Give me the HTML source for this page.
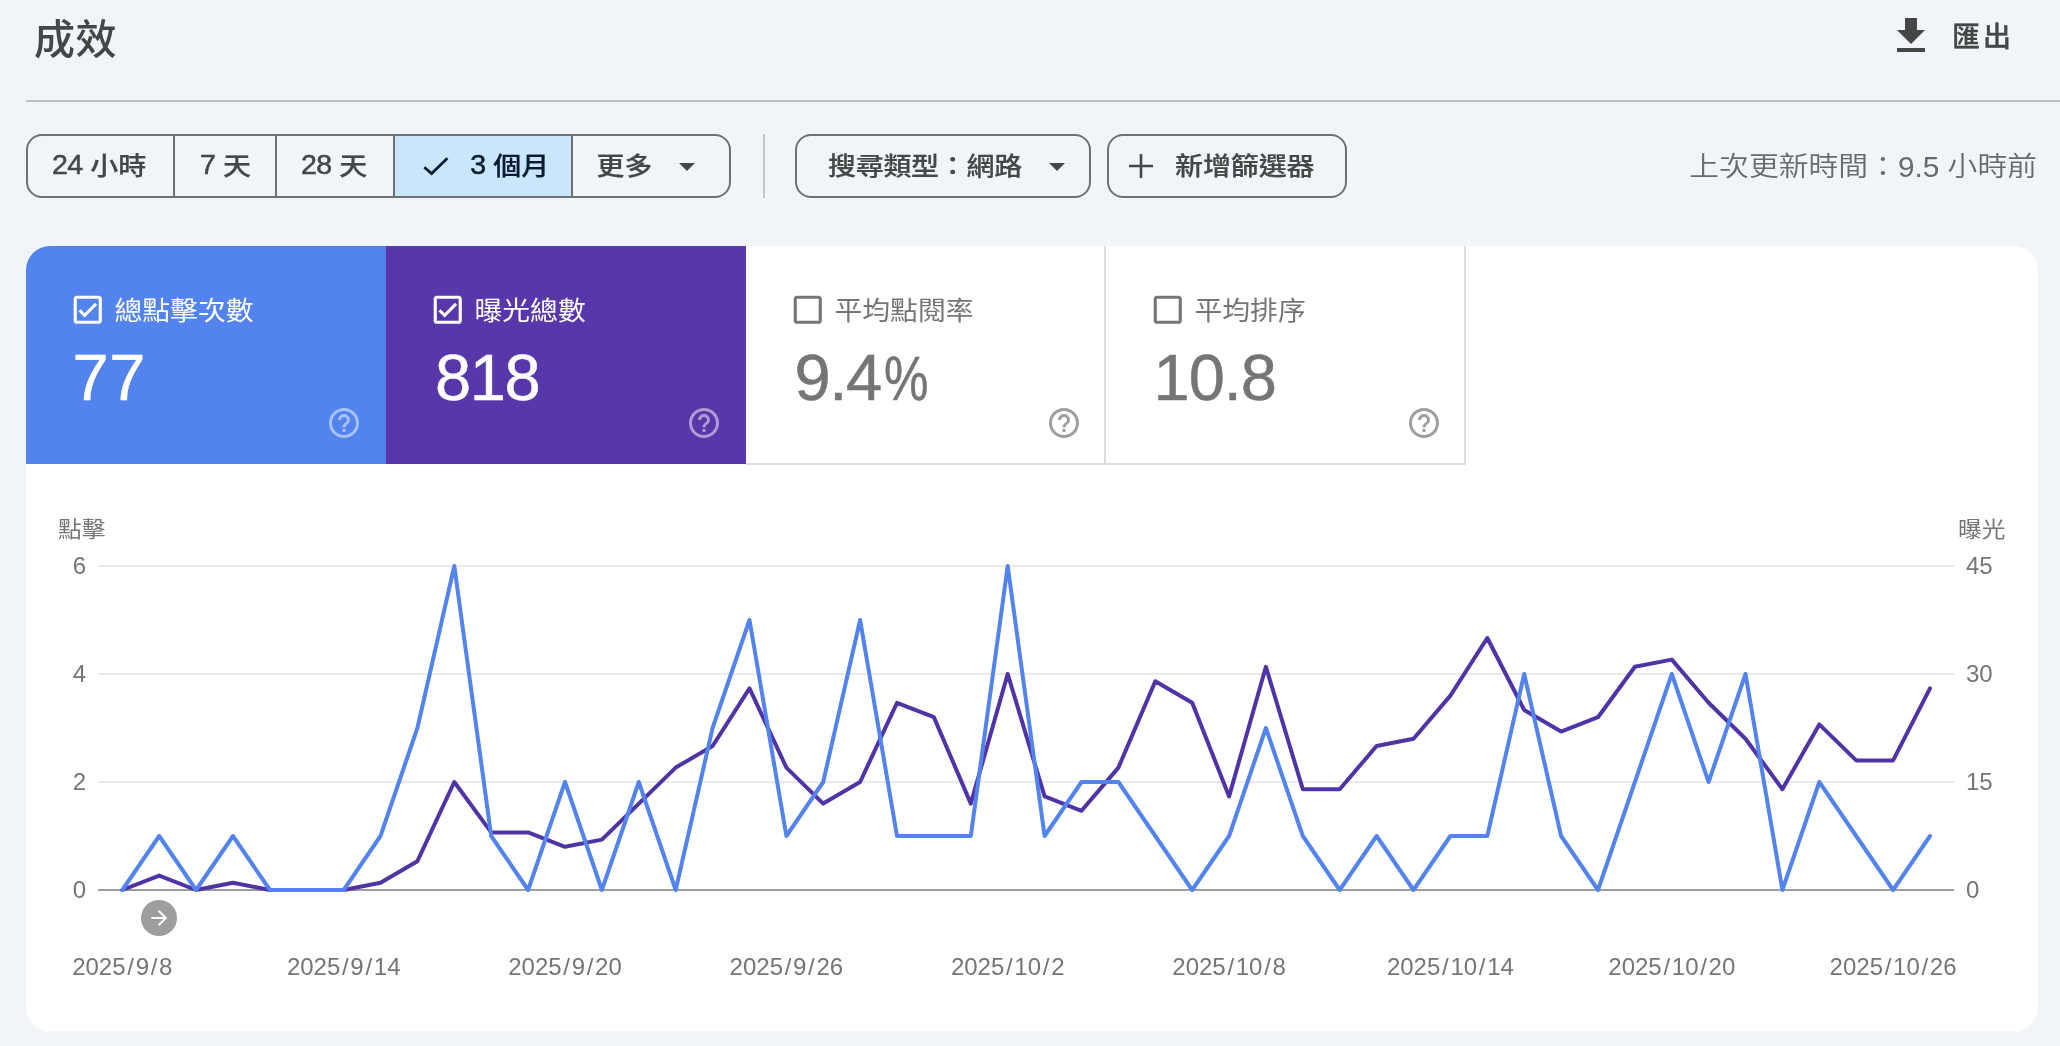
<!DOCTYPE html>
<html lang="zh-Hant"><head><meta charset="utf-8"><title>成效</title>
<style>
html,body{margin:0;padding:0}
body{width:2060px;height:1046px;overflow:hidden;background:#f1f4f8;position:relative;font-family:"Liberation Sans","Noto Sans CJK TC",sans-serif;color:#454746}
#root{position:absolute;left:0;top:0;width:2060px;height:1046px;transform:translateZ(0)}
.abs{position:absolute;white-space:nowrap}
.title{left:34px;top:10px;font-size:41px;line-height:60px;font-weight:500;color:#454746;letter-spacing:.5px}
.export{left:1952px;top:18px;font-size:28px;line-height:40px;font-weight:500;color:#454746;letter-spacing:3px;-webkit-text-stroke:.3px currentColor}
.hr{left:26px;top:100px;width:2034px;height:2px;background:#bdc1c6}
.seg{top:134px;height:60px;border:2px solid #6d7176;box-sizing:content-box;font-size:28px;line-height:60px;font-weight:500;color:#454746;-webkit-text-stroke:.25px currentColor}
.seg span{position:absolute;top:1px;white-space:nowrap}
.seg b{line-height:0;font-weight:400;font-size:28.5px;letter-spacing:-.6px;-webkit-text-stroke:.55px currentColor;position:relative;top:-2.2px}
.seg u,.upd u,.lbl u{display:inline-block;text-decoration:none;transform:scaleY(.91);transform-origin:50% 54%}
.lbl u{transform:scaleY(.94)}
.vsep{position:absolute;top:0;width:2px;height:60px;background:#6d7176}
.upd{right:23px;top:147px;font-size:29.8px;line-height:40px;font-weight:350;color:#676b70}
.card{left:26px;top:246px;width:2012px;height:785px;background:#fff;border-radius:24px;overflow:hidden}
.tab{position:absolute;top:0;height:218px;width:360px;box-sizing:border-box}
.tab .lbl{position:absolute;left:88.5px;top:44.5px;font-size:27.8px;line-height:40px;font-weight:400;white-space:nowrap}
.tab .num{position:absolute;left:46px;top:96px;font-size:65px;line-height:72px;white-space:nowrap;-webkit-text-stroke:.5px currentColor}
.tab svg.cb{position:absolute;left:43.3px;top:45.4px}
.tab svg.help{position:absolute;left:300px;top:159px}
.t1{left:0;background:#5383ec;color:#fff}
.t2{left:360px;background:#5837ab;color:#fff}
.t3{left:720px;color:#757575;height:219px;border-right:2px solid #dcdcde;border-bottom:2px solid #dcdcde}
.t4{left:1080px;color:#757575;height:219px;border-right:2px solid #dcdcde;border-bottom:2px solid #dcdcde}
.pct{display:inline-block;transform:scale(.77,.97);transform-origin:0 78%;margin-left:3px}
svg text{font-family:"Liberation Sans","Noto Sans CJK TC",sans-serif}
</style></head><body><div id="root">
<div class="abs title">成效</div>
<svg class="abs" style="left:1887px;top:12px" width="48" height="48" viewBox="0 0 24 24"><path fill="#454746" d="M19 9h-4V3H9v6H5l7 7 7-7zM5 18v2h14v-2H5z"/></svg>
<div class="abs export">匯出</div>
<div class="abs hr"></div>

<div class="abs seg" style="left:26px;width:701px;border-radius:16px">
 <span style="left:24px"><b>24</b> <u>小時</u></span><i class="vsep" style="left:145px"></i>
 <span style="left:172px"><b>7</b> <u>天</u></span><i class="vsep" style="left:247px"></i>
 <span style="left:273px"><b>28</b> <u>天</u></span>
 <div style="position:absolute;left:365px;top:0;width:180px;height:60px;background:#c9e6fc;border-left:2px solid #6d7176;border-right:2px solid #6d7176;box-sizing:border-box"></div>
 <svg style="position:absolute;left:393px;top:19px" width="30" height="24" viewBox="0 0 30 24"><path d="M3.3 12.3 L10.6 18.6 L26.4 3.3" fill="none" stroke="#071c33" stroke-width="2.8"/></svg>
 <span style="left:442.3px;color:#071c33"><b>3</b> <u>個月</u></span>
 <span style="left:568.5px"><u>更多</u></span>
 <svg style="position:absolute;left:651px;top:27px" width="16" height="8" viewBox="0 0 16 8"><path d="M0 0h16l-8 8z" fill="#454746"/></svg>
</div>
<div class="abs" style="left:763px;top:134px;width:2px;height:64px;background:#c5c7c5"></div>
<div class="abs seg" style="left:795px;width:292px;border-radius:16px">
 <span style="left:31px;letter-spacing:-.3px"><u>搜尋類型：網路</u></span>
 <svg style="position:absolute;left:252px;top:27px" width="16" height="8" viewBox="0 0 16 8"><path d="M0 0h16l-8 8z" fill="#454746"/></svg>
</div>
<div class="abs seg" style="left:1107px;width:236px;border-radius:16px">
 <svg style="position:absolute;left:20px;top:18px" width="24" height="24" viewBox="0 0 24 24"><path d="M0 12h24M12 0v24" stroke="#454746" stroke-width="2.6" fill="none"/></svg>
 <span style="left:66px;letter-spacing:-.1px"><u>新增篩選器</u></span>
</div>
<div class="abs upd"><u>上次更新時間：</u>9.5 <u>小時前</u></div>

<div class="abs card">
 <div class="tab t1">
  <svg class="cb" width="37.5" height="37.5" viewBox="0 0 24 24"><path fill="#fff" d="M19 3H5c-1.1 0-2 .9-2 2v14c0 1.1.9 2 2 2h14c1.1 0 2-.9 2-2V5c0-1.1-.9-2-2-2zm0 16H5V5h14v14zM17.99 9l-1.41-1.42-6.59 6.59-2.58-2.57-1.42 1.41 4 3.99z"/></svg>
  <div class="lbl"><u>總點擊次數</u></div><div class="num" style="margin-left:0.5px;letter-spacing:0.6px">77</div>
  <svg class="help" width="36" height="36" viewBox="0 0 24 24"><path fill="#fff" fill-opacity=".5" d="M11 18h2v-2h-2v2zm1-16C6.48 2 2 6.48 2 12s4.48 10 10 10 10-4.48 10-10S17.52 2 12 2zm0 18c-4.41 0-8-3.59-8-8s3.59-8 8-8 8 3.59 8 8-3.59 8-8 8zm0-14c-2.21 0-4 1.79-4 4h2c0-1.1.9-2 2-2s2 .9 2 2c0 2-3 1.75-3 5h2c0-2.25 3-2.5 3-5 0-2.21-1.79-4-4-4z"/></svg>
 </div>
 <div class="tab t2">
  <svg class="cb" width="37.5" height="37.5" viewBox="0 0 24 24"><path fill="#fff" d="M19 3H5c-1.1 0-2 .9-2 2v14c0 1.1.9 2 2 2h14c1.1 0 2-.9 2-2V5c0-1.1-.9-2-2-2zm0 16H5V5h14v14zM17.99 9l-1.41-1.42-6.59 6.59-2.58-2.57-1.42 1.41 4 3.99z"/></svg>
  <div class="lbl"><u>曝光總數</u></div><div class="num" style="margin-left:3px;letter-spacing:-1.4px">818</div>
  <svg class="help" width="36" height="36" viewBox="0 0 24 24"><path fill="#fff" fill-opacity=".5" d="M11 18h2v-2h-2v2zm1-16C6.48 2 2 6.48 2 12s4.48 10 10 10 10-4.48 10-10S17.52 2 12 2zm0 18c-4.41 0-8-3.59-8-8s3.59-8 8-8 8 3.59 8 8-3.59 8-8 8zm0-14c-2.21 0-4 1.79-4 4h2c0-1.1.9-2 2-2s2 .9 2 2c0 2-3 1.75-3 5h2c0-2.25 3-2.5 3-5 0-2.21-1.79-4-4-4z"/></svg>
 </div>
 <div class="tab t3">
  <svg class="cb" width="37.5" height="37.5" viewBox="0 0 24 24"><path fill="#757575" d="M19 5v14H5V5h14m0-2H5c-1.1 0-2 .9-2 2v14c0 1.1.9 2 2 2h14c1.1 0 2-.9 2-2V5c0-1.1-.9-2-2-2z"/></svg>
  <div class="lbl"><u>平均點閱率</u></div><div class="num" style="margin-left:2.5px;letter-spacing:-1.3px">9.4<span class="pct">%</span></div>
  <svg class="help" width="36" height="36" viewBox="0 0 24 24"><path fill="#9e9e9e" d="M11 18h2v-2h-2v2zm1-16C6.48 2 2 6.48 2 12s4.48 10 10 10 10-4.48 10-10S17.52 2 12 2zm0 18c-4.41 0-8-3.59-8-8s3.59-8 8-8 8 3.59 8 8-3.59 8-8 8zm0-14c-2.21 0-4 1.79-4 4h2c0-1.1.9-2 2-2s2 .9 2 2c0 2-3 1.75-3 5h2c0-2.25 3-2.5 3-5 0-2.21-1.79-4-4-4z"/></svg>
 </div>
 <div class="tab t4">
  <svg class="cb" width="37.5" height="37.5" viewBox="0 0 24 24"><path fill="#757575" d="M19 5v14H5V5h14m0-2H5c-1.1 0-2 .9-2 2v14c0 1.1.9 2 2 2h14c1.1 0 2-.9 2-2V5c0-1.1-.9-2-2-2z"/></svg>
  <div class="lbl"><u>平均排序</u></div><div class="num" style="margin-left:1.5px;letter-spacing:-1px">10.8</div>
  <svg class="help" width="36" height="36" viewBox="0 0 24 24"><path fill="#9e9e9e" d="M11 18h2v-2h-2v2zm1-16C6.48 2 2 6.48 2 12s4.48 10 10 10 10-4.48 10-10S17.52 2 12 2zm0 18c-4.41 0-8-3.59-8-8s3.59-8 8-8 8 3.59 8 8-3.59 8-8 8zm0-14c-2.21 0-4 1.79-4 4h2c0-1.1.9-2 2-2s2 .9 2 2c0 2-3 1.75-3 5h2c0-2.25 3-2.5 3-5 0-2.21-1.79-4-4-4z"/></svg>
 </div>
</div>

<svg class="abs" style="left:0;top:0" width="2060" height="1046" viewBox="0 0 2060 1046">
 <g font-size="24" fill="#757575">
  <text transform="translate(58 537.2) scale(1.01 .92)" font-size="23.5">點擊</text><text transform="translate(1958 537.2) scale(1.01 .92)" font-size="23.5">曝光</text>
  <text x="86" y="574" text-anchor="end">6</text><text x="86" y="682" text-anchor="end">4</text><text x="86" y="790" text-anchor="end">2</text><text x="86" y="898" text-anchor="end">0</text>
  <text x="1966" y="574">45</text><text x="1966" y="682">30</text><text x="1966" y="790">15</text><text x="1966" y="898">0</text>
  <text x="122.3" y="974.8" text-anchor="middle">2025<tspan dx="1.7">/</tspan><tspan dx="1.7">9</tspan><tspan dx="1.7">/</tspan><tspan dx="1.7">8</tspan></text><text x="343.7" y="974.8" text-anchor="middle">2025<tspan dx="1.7">/</tspan><tspan dx="1.7">9</tspan><tspan dx="1.7">/</tspan><tspan dx="1.7">1</tspan>4</text><text x="565.0" y="974.8" text-anchor="middle">2025<tspan dx="1.7">/</tspan><tspan dx="1.7">9</tspan><tspan dx="1.7">/</tspan><tspan dx="1.7">2</tspan>0</text><text x="786.4" y="974.8" text-anchor="middle">2025<tspan dx="1.7">/</tspan><tspan dx="1.7">9</tspan><tspan dx="1.7">/</tspan><tspan dx="1.7">2</tspan>6</text><text x="1007.7" y="974.8" text-anchor="middle">2025<tspan dx="1.7">/</tspan><tspan dx="1.7">1</tspan>0<tspan dx="1.7">/</tspan><tspan dx="1.7">2</tspan></text><text x="1229.1" y="974.8" text-anchor="middle">2025<tspan dx="1.7">/</tspan><tspan dx="1.7">1</tspan>0<tspan dx="1.7">/</tspan><tspan dx="1.7">8</tspan></text><text x="1450.4" y="974.8" text-anchor="middle">2025<tspan dx="1.7">/</tspan><tspan dx="1.7">1</tspan>0<tspan dx="1.7">/</tspan><tspan dx="1.7">1</tspan>4</text><text x="1671.8" y="974.8" text-anchor="middle">2025<tspan dx="1.7">/</tspan><tspan dx="1.7">1</tspan>0<tspan dx="1.7">/</tspan><tspan dx="1.7">2</tspan>0</text><text x="1893.1" y="974.8" text-anchor="middle">2025<tspan dx="1.7">/</tspan><tspan dx="1.7">1</tspan>0<tspan dx="1.7">/</tspan><tspan dx="1.7">2</tspan>6</text>
 </g>
 <path d="M98 566H1954M98 674H1954M98 782H1954" stroke="#ebebeb" stroke-width="2"/>
 <path d="M98 890H1954" stroke="#9e9e9e" stroke-width="2"/>
 <polyline fill="none" stroke="#5034a5" stroke-width="4" stroke-linejoin="round" stroke-linecap="round" points="122.3,890.0 159.2,875.6 196.1,890.0 233.0,882.8 269.9,890.0 306.8,890.0 343.7,890.0 380.5,882.8 417.4,861.2 454.3,782.0 491.2,832.4 528.1,832.4 565.0,846.8 601.9,839.6 638.8,803.6 675.7,767.6 712.6,746.0 749.5,688.4 786.4,767.6 823.2,803.6 860.1,782.0 897.0,702.8 933.9,717.2 970.8,803.6 1007.7,674.0 1044.6,796.4 1081.5,810.8 1118.4,767.6 1155.3,681.2 1192.2,702.8 1229.1,796.4 1265.9,666.8 1302.8,789.2 1339.7,789.2 1376.6,746.0 1413.5,738.8 1450.4,695.6 1487.3,638.0 1524.2,710.0 1561.1,731.6 1598.0,717.2 1634.9,666.8 1671.8,659.6 1708.6,702.8 1745.5,738.8 1782.4,789.2 1819.3,724.4 1856.2,760.4 1893.1,760.4 1930.0,688.4"/>
 <polyline fill="none" stroke="#5383ec" stroke-width="4" stroke-linejoin="round" stroke-linecap="round" points="122.3,890.0 159.2,836.0 196.1,890.0 233.0,836.0 269.9,890.0 306.8,890.0 343.7,890.0 380.5,836.0 417.4,728.0 454.3,566.0 491.2,836.0 528.1,890.0 565.0,782.0 601.9,890.0 638.8,782.0 675.7,890.0 712.6,728.0 749.5,620.0 786.4,836.0 823.2,782.0 860.1,620.0 897.0,836.0 933.9,836.0 970.8,836.0 1007.7,566.0 1044.6,836.0 1081.5,782.0 1118.4,782.0 1155.3,836.0 1192.2,890.0 1229.1,836.0 1265.9,728.0 1302.8,836.0 1339.7,890.0 1376.6,836.0 1413.5,890.0 1450.4,836.0 1487.3,836.0 1524.2,674.0 1561.1,836.0 1598.0,890.0 1634.9,782.0 1671.8,674.0 1708.6,782.0 1745.5,674.0 1782.4,890.0 1819.3,782.0 1856.2,836.0 1893.1,890.0 1930.0,836.0"/>
 <circle cx="159" cy="918" r="18" fill="#9e9e9e"/>
 <path transform="translate(147.3 906)" fill="#fff" d="M12 4l-1.41 1.41L16.17 11H4v2h12.17l-5.58 5.59L12 20l8-8z"/>
</svg>
</div></body></html>
